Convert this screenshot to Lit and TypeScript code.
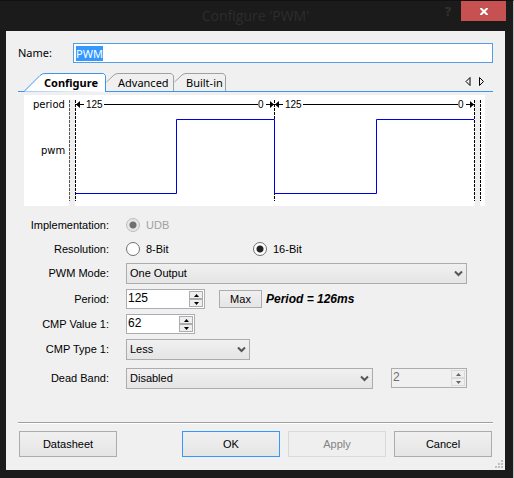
import { LitElement, html, svg, css } from "lit";
import { customElement, query } from "lit/decorators.js";

const chevron = html`<svg class="chevron" width="9" height="7" viewBox="0 0 9 7" aria-hidden="true">
  <path d="M1 1.5 L4.5 5 L8 1.5" fill="none" stroke="#555" stroke-width="2" />
</svg>`;

const spinArrows = html`<span class="arrows">
  <button class="step" type="button" tabindex="-1" aria-label="Increase">
    <svg width="5" height="3" viewBox="0 0 5 3"><path d="M0 3 L2.5 0 L5 3Z" /></svg>
  </button>
  <button class="step" type="button" tabindex="-1" aria-label="Decrease">
    <svg width="5" height="3" viewBox="0 0 5 3"><path d="M0 0 L2.5 3 L5 0Z" /></svg>
  </button>
</span>`;

const periodSpan = (from: number, to: number) => svg`
  <path class="dim" d="M${from} 9.5 H${from + 8} M${from + 28} 9.5 H${to - 16} M${to - 8} 9.5 H${to}" />
  <path d="M${from} 9.5 l4 -3.5 v7Z M${to} 9.5 l-4 -3.5 v7Z" />
  <text x=${from + 10} y="13">125</text>
  <text x=${to - 16} y="13">0</text>`;

@customElement("wave-diagram")
export class WaveDiagram extends LitElement {
  static styles = css`
    :host { display: block; background: #fff; }
    svg { display: block; width: 100%; height: auto; }
    text { font: 10px "Liberation Sans", Arial, sans-serif; fill: #000; }
    .caption { font: 10px Verdana, "DejaVu Sans", sans-serif; }
    .dim { stroke: #000; fill: none; }
    .edge { stroke: #000; stroke-dasharray: 3 1; }
    .faint { stroke: #555; }
    .wave { stroke: #0000e6; fill: none; }
    .band { fill: #efefef; }
  `;

  render() {
    return html`<svg viewBox="0 0 461 111" role="img" aria-label="PWM waveform">
      <rect class="band" x="45" y="5" width="6" height="106" />
      <rect class="band" x="451" y="5" width="5" height="106" />
      <path class="edge faint" d="M45.5 5 V106" />
      <path class="edge" d="M51.5 5 V106 M250.5 5 V106 M450.5 5 V106 M456.5 5 V106" />
      ${periodSpan(52, 250)} ${periodSpan(251, 450)}
      <path class="wave" d="M52 98.5 H152.5 V24.5 H250.5 V98.5 H352.5 V24.5 H450" />
      <text class="caption" x="9" y="13">period</text>
      <text class="caption" x="17" y="59">pwm</text>
    </svg>`;
  }
}

@customElement("app-root")
export class AppRoot extends LitElement {
  @query("#name") private nameInput!: HTMLInputElement;

  static styles = css`
    :host {
      display: block;
      background: #1b1b1b;
      border-top: 1px solid #111;
      border-right: 1px solid #c4c4c4;
      padding: 0 8px 8px 6px;
      font: 11px/14px "Liberation Sans", Arial, sans-serif;
      color: #000;
    }
    * { box-sizing: border-box; }
    input, select, button { font: inherit; color: inherit; margin: 0; border-radius: 0; }
    .titlebar { display: flex; height: 30px; align-items: flex-start; }
    .title {
      flex: 1; margin: 0; padding-left: 70px; text-align: center;
      font: 14px/30px "Open Sans", sans-serif; color: #2d2d2d;
    }
    .help, .close { border: 0; padding: 0; height: 20px; }
    .help { width: 26px; background: none; color: #333; font: bold 13px/20px "Open Sans", sans-serif; }
    .close { width: 45px; margin-right: -1px; background: #c75050; color: #fff; display: grid; place-items: center; }
    .client { position: relative; background: #f0f0f0; padding: 12px 12px 13px; }
    .name-row { display: flex; align-items: center; }
    .name-row label { width: 55px; font: 11px/14px "Noto Sans", sans-serif; }
    .name {
      flex: 1; min-width: 0; height: 20px; border: 1px solid #569de5; padding: 0 2px;
      background: #fff; outline: none; font: 11px/14px "Noto Sans", sans-serif;
    }
    .name::selection { background: #3399ff; color: #fff; }
    .tabs {
      display: flex; align-items: flex-end; height: 29px; padding: 0 8px 0 6px;
      background: linear-gradient(#3c96f0, #3c96f0) bottom / 100% 1px no-repeat;
    }
    .tab {
      position: relative; height: 19px; padding: 0; border: 0; background: none;
      font: 11px/19px "Noto Sans", sans-serif; text-align: left; white-space: nowrap;
    }
    .tab svg { position: absolute; left: 0; top: 0; overflow: visible; }
    .tab span { position: relative; }
    .active { width: 82px; padding-left: 20px; font-weight: bold; z-index: 1; }
    .second { width: 68px; padding-left: 12px; }
    .third { width: 52px; padding-left: 12px; }
    .scroll { display: flex; gap: 8px; margin-left: auto; padding-bottom: 6px; }
    .scroll button { border: 0; padding: 0; width: 6px; height: 9px; background: none; }
    .scroll svg { display: block; }
    wave-diagram { margin: 3px 8px 7px 6px; }
    .form {
      display: grid; grid-template-columns: 91px 1fr; column-gap: 17px;
      grid-template-rows: 24px 24px 24px 28px 22px 28px 30px; align-items: center;
      padding-right: 26px;
    }
    .form > label, .form > .legend { text-align: right; }
    .cell { display: flex; align-items: center; }
    .choice { display: flex; align-items: center; gap: 6px; width: 127px; }
    .choice.off { color: #a0a0a0; }
    .radio {
      appearance: none; width: 14px; height: 14px; border: 1px solid #707070; border-radius: 50%;
      background: #fff;
    }
    .radio:checked { background: radial-gradient(circle, #222 0 3px, #fff 4px); }
    .radio:disabled { border-color: #bcbcbc; background: radial-gradient(circle, #707070 0 3px, #e6e6e6 4px); }
    .combo { position: relative; display: flex; }
    .combo select {
      appearance: none; width: 100%; height: 21px; padding: 0 20px 0 3px; border: 1px solid #acacac;
      background: linear-gradient(#f0f0f0, #e5e5e5);
    }
    .chevron { position: absolute; right: 4px; top: 7px; pointer-events: none; }
    .wide { flex: 1; }
    .less { width: 124px; }
    .band { flex: 1; margin-right: 18px; }
    .spin { display: flex; height: 20px; border: 1px solid #abadb3; background: #fff; padding: 1px; }
    .spin input {
      flex: 1; min-width: 0; border: 0; padding: 0 0 2px; background: none; outline: none;
      font-size: 12px;
    }
    .arrows { display: flex; flex-direction: column; width: 14px; }
    .step {
      flex: 1; display: grid; place-items: center; padding: 0; min-height: 0;
      border: 1px solid #acacac; background: #efefef;
    }
    .s80 { width: 79px; }
    .s68 { width: 69px; }
    .s76 { width: 76px; background: #f0f0f0; color: #6d6d6d; }
    .s76 .step { border-color: #dadada; fill: #666; }
    .push { border: 1px solid #acacac; background: linear-gradient(#f0f0f0, #e5e5e5); padding: 0; height: 26px; }
    .max { width: 43px; height: 18px; margin: 0 4px 0 14px; }
    .period-note { font-size: 12px; font-weight: bold; font-style: italic; }
    .footer {
      display: flex; gap: 8px; margin-top: 29px; padding: 8px 1px 0;
      border-top: 1px solid #a0a0a0; box-shadow: inset 0 1px #fff;
    }
    .footer .push { width: 98px; }
    .datasheet { margin-right: auto; }
    .footer .ok { border-color: #3399ff; }
    .push:disabled { color: #838383; border-color: #d9d9d9; background: #efefef; }
    .grip { position: absolute; right: 2px; bottom: 2px; fill: #bfbfbf; }
  `;

  firstUpdated() {
    this.nameInput.focus();
    this.nameInput.select();
  }

  render() {
    return html`
      <header class="titlebar">
        <h1 class="title">Configure 'PWM'</h1>
        <button class="help" type="button" aria-label="Help">?</button>
        <button class="close" type="button" aria-label="Close">
          <svg width="8" height="7" viewBox="0 0 8 7"><path d="M0.5 0 L7.5 7 M7.5 0 L0.5 7" stroke="#fff" stroke-width="2" /></svg>
        </button>
      </header>
      <main class="client">
        <div class="name-row">
          <label for="name">Name:</label>
          <input id="name" class="name" type="text" value="PWM" spellcheck="false" />
        </div>
        <nav class="tabs">
          <button class="tab active" type="button">
            <svg width="82" height="19" viewBox="0 0 82 19"><path d="M0 18.5 L16 2.5 Q18 0.5 21 0.5 H79.5 L81.5 2.5 V19" fill="#fff" stroke="#3c96f0" /></svg><span>Configure</span>
          </button>
          <button class="tab second" type="button">
            <svg width="68" height="18" viewBox="0 0 68 18"><path d="M0.5 9 L8 2 Q10 0.5 12 0.5 H65 L67.5 2.5 V18" fill="none" stroke="#a0a0a0" /></svg><span>Advanced</span>
          </button>
          <button class="tab third" type="button">
            <svg width="52" height="18" viewBox="0 0 52 18"><path d="M0.5 9 L8 2 Q10 0.5 12 0.5 H49 L51.5 2.5 V18" fill="none" stroke="#a0a0a0" /></svg><span>Built-in</span>
          </button>
          <span class="scroll">
            <button type="button" aria-label="Previous tab"><svg width="6" height="9" viewBox="0 0 6 9"><path d="M5 0.5 V8.5 L1 4.5Z" fill="none" stroke="#000" /></svg></button>
            <button type="button" aria-label="Next tab"><svg width="6" height="9" viewBox="0 0 6 9"><path d="M0.5 0.5 V8.5 L4.5 4.5Z" fill="none" stroke="#000" /></svg></button>
          </span>
        </nav>
        <wave-diagram></wave-diagram>
        <form class="form">
          <span class="legend">Implementation:</span>
          <div class="cell">
            <label class="choice off"><input class="radio" type="radio" name="impl" checked disabled />UDB</label>
          </div>
          <span class="legend">Resolution:</span>
          <div class="cell">
            <label class="choice"><input class="radio" type="radio" name="res" />8-Bit</label>
            <label class="choice"><input class="radio" type="radio" name="res" checked />16-Bit</label>
          </div>
          <label for="mode">PWM Mode:</label>
          <div class="cell">
            <span class="combo wide"><select id="mode"><option>One Output</option></select>${chevron}</span>
          </div>
          <label for="period">Period:</label>
          <div class="cell">
            <span class="spin s80"><input id="period" type="text" value="125" />${spinArrows}</span>
            <button class="push max" type="button">Max</button>
            <span class="period-note">Period = 126ms</span>
          </div>
          <label for="cmp-value">CMP Value 1:</label>
          <div class="cell">
            <span class="spin s68"><input id="cmp-value" type="text" value="62" />${spinArrows}</span>
          </div>
          <label for="cmp-type">CMP Type 1:</label>
          <div class="cell">
            <span class="combo less"><select id="cmp-type"><option>Less</option></select>${chevron}</span>
          </div>
          <label for="dead-band">Dead Band:</label>
          <div class="cell">
            <span class="combo band"><select id="dead-band"><option>Disabled</option></select>${chevron}</span>
            <span class="spin s76"><input type="text" value="2" aria-label="Dead band width" disabled />${spinArrows}</span>
          </div>
        </form>
        <footer class="footer">
          <button class="push datasheet" type="button">Datasheet</button>
          <button class="push ok" type="button">OK</button>
          <button class="push" type="button" disabled>Apply</button>
          <button class="push" type="button">Cancel</button>
        </footer>
        <svg class="grip" width="8" height="8" viewBox="0 0 8 8" aria-hidden="true">
          <path d="M6 0h2v2h-2Z M3 3h2v2h-2Z M6 3h2v2h-2Z M0 6h2v2h-2Z M3 6h2v2h-2Z M6 6h2v2h-2Z" />
        </svg>
      </main>
    `;
  }
}
